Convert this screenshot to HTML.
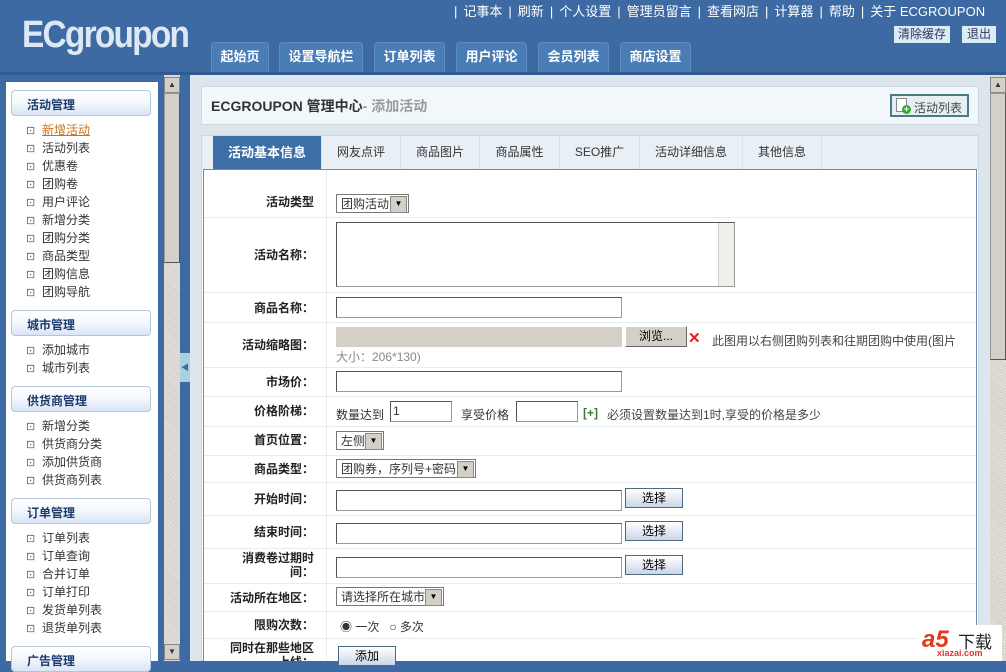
<!DOCTYPE html>
<html><head><meta charset="utf-8"><style>
*{margin:0;padding:0;box-sizing:border-box}
body{width:1006px;height:661px;overflow:hidden;background:#3d6aa2;font:12px "Liberation Sans","Noto Sans CJK SC",sans-serif;color:#333;position:relative}
.a{position:absolute}
.top span{display:inline-block;margin:0 6px}
.nav{position:absolute;top:42px;height:31px;background:#4a7cb5;border:1px solid #5c8cc2;border-bottom:none;border-radius:4px 4px 0 0;color:#fff;font-weight:bold;font-size:13px;text-align:center;line-height:28px}
.side{left:6px;top:82px;width:152px;height:579px;background:#fff}
.gh{position:absolute;left:5px;width:140px;height:26px;border:1px solid #b5c6d9;border-radius:4px;background:linear-gradient(#fff 0,#f4f7fc 50%,#d9e4f7 100%);font-weight:bold;color:#1c3b6b;font-size:12px;padding:5px 0 0 15px}
.it{position:absolute;left:20px;height:18px;line-height:18px;color:#333}
.it:before{content:"⊡";display:inline-block;width:12px;font-size:11px;color:#666;margin-right:4px}
.lab{position:absolute;right:0;width:120px;text-align:right;font-weight:bold;color:#222;line-height:14px}
.row{position:absolute;left:0;width:773px;border-bottom:1px solid #e6ecef}
.inp{position:absolute;height:21px;border:1px solid #999;border-top-color:#555;border-left-color:#555;background:#fff}
.sel{position:absolute;height:19px;border:1px solid #777;background:#fff;padding:1px 0 0 4px;line-height:16px}
.sel:after{content:"▼";position:absolute;right:1px;top:1px;width:15px;height:15px;background:#d4d0c8;border:1px solid #888;font-size:8px;text-align:center;line-height:14px;color:#000}
.btn{position:absolute;width:58px;height:20px;border:1px solid #4d6a80;background:linear-gradient(#fff,#c9d6e6);text-align:center;line-height:18px;color:#000}
.tab{position:absolute;top:0;height:33px;line-height:33px;text-align:center;border-right:1px solid #d7e1e9;color:#333}
</style></head><body>
<div class="a" style="left:22px;top:14px;font:bold 38px 'Liberation Sans',sans-serif;color:#dce8f4;letter-spacing:-2px;transform:scaleX(0.88);transform-origin:left">ECgroupon</div>
<div class="a top" style="left:454px;top:1px;color:#fff;font-size:13px;white-space:nowrap">|<span>记事本</span>|<span>刷新</span>|<span>个人设置</span>|<span>管理员留言</span>|<span>查看网店</span>|<span>计算器</span>|<span>帮助</span>|<span>关于 ECGROUPON</span></div>
<div class="a" style="left:894px;top:26px;width:56px;height:17px;background:#dcecf4;color:#336;text-align:center;line-height:17px">清除缓存</div>
<div class="a" style="left:962px;top:26px;width:34px;height:17px;background:#dcecf4;color:#336;text-align:center;line-height:17px">退出</div>
<div class="nav" style="left:211px;width:58px">起始页</div>
<div class="nav" style="left:279px;width:84px">设置导航栏</div>
<div class="nav" style="left:374px;width:71px">订单列表</div>
<div class="nav" style="left:456px;width:71px">用户评论</div>
<div class="nav" style="left:538px;width:71px">会员列表</div>
<div class="nav" style="left:620px;width:71px">商店设置</div>
<div class="a" style="left:0;top:72px;width:1006px;height:3px;background:#2f5b92"></div>
<div class="a side">
<div class="gh" style="top:8px">活动管理</div>
<div class="it" style="top:39px;color:#c8741c;text-decoration:underline">新增活动</div>
<div class="it" style="top:57px">活动列表</div>
<div class="it" style="top:75px">优惠卷</div>
<div class="it" style="top:93px">团购卷</div>
<div class="it" style="top:111px">用户评论</div>
<div class="it" style="top:129px">新增分类</div>
<div class="it" style="top:147px">团购分类</div>
<div class="it" style="top:165px">商品类型</div>
<div class="it" style="top:183px">团购信息</div>
<div class="it" style="top:201px">团购导航</div>
<div class="gh" style="top:228px">城市管理</div>
<div class="it" style="top:259px">添加城市</div>
<div class="it" style="top:277px">城市列表</div>
<div class="gh" style="top:304px">供货商管理</div>
<div class="it" style="top:335px">新增分类</div>
<div class="it" style="top:353px">供货商分类</div>
<div class="it" style="top:371px">添加供货商</div>
<div class="it" style="top:389px">供货商列表</div>
<div class="gh" style="top:416px">订单管理</div>
<div class="it" style="top:447px">订单列表</div>
<div class="it" style="top:465px">订单查询</div>
<div class="it" style="top:483px">合并订单</div>
<div class="it" style="top:501px">订单打印</div>
<div class="it" style="top:519px">发货单列表</div>
<div class="it" style="top:537px">退货单列表</div>
<div class="gh" style="top:564px">广告管理</div>
</div>
<div class="a" style="left:158px;top:75px;width:6px;height:586px;background:#3d6aa2"></div>
<div class="a" style="left:164px;top:75px;width:16px;height:586px;background:repeating-linear-gradient(45deg,#e8e6e0 0 1px,#cfcbc2 1px 2px)"></div>
<div class="a" style="left:164px;top:77px;width:16px;height:16px;background:#d4d0c8;border:1px solid #888;font-size:8px;text-align:center;line-height:14px">▲</div>
<div class="a" style="left:164px;top:93px;width:16px;height:170px;background:#d4d0c8;border:1px solid #999;border-right-color:#555;border-bottom-color:#555"></div>
<div class="a" style="left:164px;top:644px;width:16px;height:16px;background:#d4d0c8;border:1px solid #888;font-size:8px;text-align:center;line-height:14px">▼</div>
<div class="a" style="left:180px;top:353px;width:10px;height:29px;background:#aad0e0;color:#3d6aa2;font-size:8px;line-height:29px;text-align:center">◀</div>
<div class="a" style="left:190px;top:75px;width:800px;height:586px;background:#dde6ec"></div>
<div class="a" style="left:201px;top:86px;width:778px;height:39px;background:#f2f7fa;border:1px solid #cbd8e0"></div>
<div class="a" style="left:211px;top:96px;font-size:14px;font-weight:bold;color:#333">ECGROUPON 管理中心<span style="color:#999">- 添加活动</span></div>
<div class="a" style="left:890px;top:94px;width:79px;height:23px;border:2px solid #4b7a82;background:#e6f0f2;padding:3px 0 0 22px;color:#444">活动列表</div>
<div class="a" style="left:896px;top:98px;width:11px;height:14px;border:1px solid #888;background:#fff"></div>
<div class="a" style="left:902px;top:105px;width:9px;height:9px;border-radius:50%;background:#3a3;color:#fff;font-size:9px;line-height:9px;text-align:center;font-weight:bold">+</div>
<div class="a" style="left:201px;top:135px;width:778px;height:526px;background:#fff;border:1px solid #cbd8e0"></div>
<div class="a" style="left:202px;top:136px;width:776px;height:33px;background:#e8f0f6">
<div class="tab" style="left:11px;width:109px;background:#3e6ea6;color:#fff;font-weight:bold;font-size:13px">活动基本信息</div>
<div class="tab" style="left:120px;width:79px">网友点评</div>
<div class="tab" style="left:199px;width:79px">商品图片</div>
<div class="tab" style="left:278px;width:80px">商品属性</div>
<div class="tab" style="left:358px;width:80px">SEO推广</div>
<div class="tab" style="left:438px;width:103px">活动详细信息</div>
<div class="tab" style="left:541px;width:79px">其他信息</div>
</div>
<div class="a" style="left:203px;top:169px;width:774px;height:492px;border:1px solid #6a8aa8;border-bottom:none;background:#fff;overflow:hidden">
<div class="a" style="left:122px;top:0;width:1px;height:492px;background:#e6ecef"></div>
<div class="row" style="top:0;height:48px"><div class="lab" style="left:0;width:110px;top:25px">活动类型</div></div>
<div class="row" style="top:48px;height:75px"><div class="lab" style="left:0;width:110px;top:30px">活动名称：</div></div>
<div class="row" style="top:123px;height:30px"><div class="lab" style="left:0;width:110px;top:8px">商品名称：</div></div>
<div class="row" style="top:153px;height:45px"><div class="lab" style="left:0;width:110px;top:15px">活动缩略图：</div></div>
<div class="row" style="top:198px;height:29px"><div class="lab" style="left:0;width:110px;top:7px">市场价：</div></div>
<div class="row" style="top:227px;height:30px"><div class="lab" style="left:0;width:110px;top:7px">价格阶梯：</div></div>
<div class="row" style="top:257px;height:29px"><div class="lab" style="left:0;width:110px;top:6px">首页位置：</div></div>
<div class="row" style="top:286px;height:27px"><div class="lab" style="left:0;width:110px;top:6px">商品类型：</div></div>
<div class="row" style="top:313px;height:33px"><div class="lab" style="left:0;width:110px;top:9px">开始时间：</div></div>
<div class="row" style="top:346px;height:33px"><div class="lab" style="left:0;width:110px;top:9px">结束时间：</div></div>
<div class="row" style="top:379px;height:35px"><div class="lab" style="left:0;width:110px;top:2px">消费卷过期时<br>间：</div></div>
<div class="row" style="top:414px;height:28px"><div class="lab" style="left:0;width:110px;top:7px">活动所在地区：</div></div>
<div class="row" style="top:442px;height:27px"><div class="lab" style="left:0;width:110px;top:6px">限购次数：</div></div>
<div class="row" style="top:469px;height:30px;border:none"><div class="lab" style="left:0;width:110px;top:2px">同时在那些地区<br>上线：</div></div>
</div>
<div class="sel" style="left:336px;top:194px;width:73px">团购活动</div>
<div class="inp" style="left:336px;top:222px;width:399px;height:65px"></div>
<div class="a" style="left:718px;top:223px;width:16px;height:63px;background:#f0efea;border-left:1px solid #ccc"></div>
<div class="inp" style="left:336px;top:297px;width:286px"></div>
<div class="a" style="left:336px;top:327px;width:286px;height:20px;background:#d4d0c8"></div>
<div class="a" style="left:625px;top:326px;width:62px;height:21px;background:#d4d0c8;border:1px solid #666;border-top-color:#fff;border-left-color:#fff;text-align:center;line-height:19px;color:#000">浏览...</div>
<div class="a" style="left:688px;top:329px;color:#d22;font-weight:bold;font-size:15px">✕</div>
<div class="a" style="left:712px;top:332px;color:#444">此图用以右侧团购列表和往期团购中使用(图片</div>
<div class="a" style="left:336px;top:348px;color:#888">大小：206*130)</div>
<div class="inp" style="left:336px;top:371px;width:286px"></div>
<div class="a" style="left:336px;top:406px;color:#333">数量达到</div>
<div class="inp" style="left:390px;top:401px;width:62px;padding-left:2px;line-height:19px">1</div>
<div class="a" style="left:461px;top:406px">享受价格</div>
<div class="inp" style="left:516px;top:401px;width:62px"></div>
<div class="a" style="left:583px;top:406px;color:#3a7a3a;font-weight:bold">[+]</div>
<div class="a" style="left:607px;top:406px;color:#444">必须设置数量达到1时,享受的价格是多少</div>
<div class="sel" style="left:336px;top:431px;width:48px">左侧</div>
<div class="sel" style="left:336px;top:459px;width:140px">团购券，序列号+密码</div>
<div class="inp" style="left:336px;top:490px;width:286px"></div>
<div class="btn" style="left:625px;top:488px">选择</div>
<div class="inp" style="left:336px;top:523px;width:286px"></div>
<div class="btn" style="left:625px;top:521px">选择</div>
<div class="inp" style="left:336px;top:557px;width:286px"></div>
<div class="btn" style="left:625px;top:555px">选择</div>
<div class="sel" style="left:336px;top:587px;width:108px">请选择所在城市</div>
<div class="a" style="left:340px;top:618px">◉ 一次 &nbsp; ○ 多次</div>
<div class="btn" style="left:338px;top:646px">添加</div>
<div class="a" style="left:990px;top:75px;width:16px;height:586px;background:repeating-linear-gradient(45deg,#e8e6e0 0 1px,#cfcbc2 1px 2px)"></div>
<div class="a" style="left:990px;top:77px;width:16px;height:16px;background:#d4d0c8;border:1px solid #888;font-size:8px;text-align:center;line-height:14px">▲</div>
<div class="a" style="left:990px;top:93px;width:16px;height:267px;background:#d4d0c8;border:1px solid #999;border-right-color:#555;border-bottom-color:#555"></div>
<div class="a" style="left:918px;top:625px;width:84px;height:36px;background:#fff"></div>
<div class="a" style="left:922px;top:626px;color:#e03a1a;font:bold italic 24px 'Liberation Sans',sans-serif">a5</div>
<div class="a" style="left:958px;top:628px;color:#222;font-size:17px">下载</div>
<div class="a" style="left:937px;top:648px;color:#d33;font-size:9px;font-weight:bold">xiazai.com</div>
</body></html>
